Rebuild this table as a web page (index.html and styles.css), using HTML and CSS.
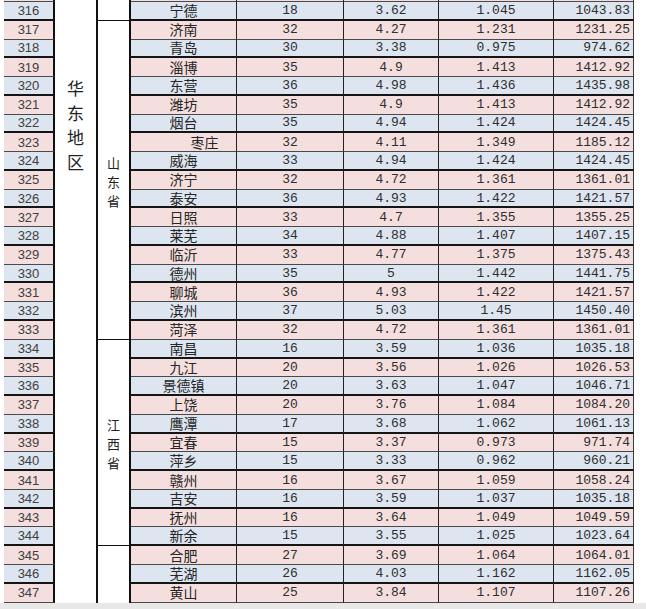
FILE: index.html
```html
<!DOCTYPE html>
<html lang="zh-CN">
<head>
<meta charset="utf-8">
<title>华东地区</title>
<link rel="stylesheet" href="styles.css">
</head>
<body>
<div class="sheet">
  <div class="region"><span class="region-text">华<br>东<br>地<br>区</span></div>
  <div class="prov prov-fj"></div>
  <div class="prov prov-sd"><span class="prov-text">山<br>东<br>省</span></div>
  <div class="prov prov-jx"><span class="prov-text">江<br>西<br>省</span></div>
  <div class="prov prov-ah"></div>

  <div class="row pink top"><div class="cell num"></div><div class="cell city"></div><div class="cell val"></div><div class="cell val"></div><div class="cell val"></div><div class="cell val total"></div></div>

  <div class="row blue"><div class="cell num">316</div><div class="cell city">宁德</div><div class="cell val">18</div><div class="cell val">3.62</div><div class="cell val">1.045</div><div class="cell val total">1043.83</div></div>
  <div class="row pink"><div class="cell num">317</div><div class="cell city">济南</div><div class="cell val">32</div><div class="cell val">4.27</div><div class="cell val">1.231</div><div class="cell val total">1231.25</div></div>
  <div class="row blue"><div class="cell num">318</div><div class="cell city">青岛</div><div class="cell val">30</div><div class="cell val">3.38</div><div class="cell val">0.975</div><div class="cell val total">974.62</div></div>
  <div class="row pink"><div class="cell num">319</div><div class="cell city">淄博</div><div class="cell val">35</div><div class="cell val">4.9</div><div class="cell val">1.413</div><div class="cell val total">1412.92</div></div>
  <div class="row blue"><div class="cell num">320</div><div class="cell city">东营</div><div class="cell val">36</div><div class="cell val">4.98</div><div class="cell val">1.436</div><div class="cell val total">1435.98</div></div>
  <div class="row pink"><div class="cell num">321</div><div class="cell city">潍坊</div><div class="cell val">35</div><div class="cell val">4.9</div><div class="cell val">1.413</div><div class="cell val total">1412.92</div></div>
  <div class="row blue"><div class="cell num">322</div><div class="cell city">烟台</div><div class="cell val">35</div><div class="cell val">4.94</div><div class="cell val">1.424</div><div class="cell val total">1424.45</div></div>
  <div class="row pink"><div class="cell num">323</div><div class="cell city shift">枣庄</div><div class="cell val">32</div><div class="cell val">4.11</div><div class="cell val">1.349</div><div class="cell val total">1185.12</div></div>
  <div class="row blue"><div class="cell num">324</div><div class="cell city">威海</div><div class="cell val">33</div><div class="cell val">4.94</div><div class="cell val">1.424</div><div class="cell val total">1424.45</div></div>
  <div class="row pink"><div class="cell num">325</div><div class="cell city">济宁</div><div class="cell val">32</div><div class="cell val">4.72</div><div class="cell val">1.361</div><div class="cell val total">1361.01</div></div>
  <div class="row blue"><div class="cell num">326</div><div class="cell city">泰安</div><div class="cell val">36</div><div class="cell val">4.93</div><div class="cell val">1.422</div><div class="cell val total">1421.57</div></div>
  <div class="row pink"><div class="cell num">327</div><div class="cell city">日照</div><div class="cell val">33</div><div class="cell val">4.7</div><div class="cell val">1.355</div><div class="cell val total">1355.25</div></div>
  <div class="row blue"><div class="cell num">328</div><div class="cell city">莱芜</div><div class="cell val">34</div><div class="cell val">4.88</div><div class="cell val">1.407</div><div class="cell val total">1407.15</div></div>
  <div class="row pink"><div class="cell num">329</div><div class="cell city">临沂</div><div class="cell val">33</div><div class="cell val">4.77</div><div class="cell val">1.375</div><div class="cell val total">1375.43</div></div>
  <div class="row blue"><div class="cell num">330</div><div class="cell city">德州</div><div class="cell val">35</div><div class="cell val">5</div><div class="cell val">1.442</div><div class="cell val total">1441.75</div></div>
  <div class="row pink"><div class="cell num">331</div><div class="cell city">聊城</div><div class="cell val">36</div><div class="cell val">4.93</div><div class="cell val">1.422</div><div class="cell val total">1421.57</div></div>
  <div class="row blue"><div class="cell num">332</div><div class="cell city">滨州</div><div class="cell val">37</div><div class="cell val">5.03</div><div class="cell val">1.45</div><div class="cell val total">1450.40</div></div>
  <div class="row pink"><div class="cell num">333</div><div class="cell city">菏泽</div><div class="cell val">32</div><div class="cell val">4.72</div><div class="cell val">1.361</div><div class="cell val total">1361.01</div></div>
  <div class="row blue"><div class="cell num">334</div><div class="cell city">南昌</div><div class="cell val">16</div><div class="cell val">3.59</div><div class="cell val">1.036</div><div class="cell val total">1035.18</div></div>
  <div class="row pink"><div class="cell num">335</div><div class="cell city">九江</div><div class="cell val">20</div><div class="cell val">3.56</div><div class="cell val">1.026</div><div class="cell val total">1026.53</div></div>
  <div class="row blue"><div class="cell num">336</div><div class="cell city">景德镇</div><div class="cell val">20</div><div class="cell val">3.63</div><div class="cell val">1.047</div><div class="cell val total">1046.71</div></div>
  <div class="row pink"><div class="cell num">337</div><div class="cell city">上饶</div><div class="cell val">20</div><div class="cell val">3.76</div><div class="cell val">1.084</div><div class="cell val total">1084.20</div></div>
  <div class="row blue"><div class="cell num">338</div><div class="cell city">鹰潭</div><div class="cell val">17</div><div class="cell val">3.68</div><div class="cell val">1.062</div><div class="cell val total">1061.13</div></div>
  <div class="row pink"><div class="cell num">339</div><div class="cell city">宜春</div><div class="cell val">15</div><div class="cell val">3.37</div><div class="cell val">0.973</div><div class="cell val total">971.74</div></div>
  <div class="row blue"><div class="cell num">340</div><div class="cell city">萍乡</div><div class="cell val">15</div><div class="cell val">3.33</div><div class="cell val">0.962</div><div class="cell val total">960.21</div></div>
  <div class="row pink"><div class="cell num">341</div><div class="cell city">赣州</div><div class="cell val">16</div><div class="cell val">3.67</div><div class="cell val">1.059</div><div class="cell val total">1058.24</div></div>
  <div class="row blue"><div class="cell num">342</div><div class="cell city">吉安</div><div class="cell val">16</div><div class="cell val">3.59</div><div class="cell val">1.037</div><div class="cell val total">1035.18</div></div>
  <div class="row pink"><div class="cell num">343</div><div class="cell city">抚州</div><div class="cell val">16</div><div class="cell val">3.64</div><div class="cell val">1.049</div><div class="cell val total">1049.59</div></div>
  <div class="row blue"><div class="cell num">344</div><div class="cell city">新余</div><div class="cell val">15</div><div class="cell val">3.55</div><div class="cell val">1.025</div><div class="cell val total">1023.64</div></div>
  <div class="row pink"><div class="cell num">345</div><div class="cell city">合肥</div><div class="cell val">27</div><div class="cell val">3.69</div><div class="cell val">1.064</div><div class="cell val total">1064.01</div></div>
  <div class="row blue"><div class="cell num">346</div><div class="cell city">芜湖</div><div class="cell val">26</div><div class="cell val">4.03</div><div class="cell val">1.162</div><div class="cell val total">1162.05</div></div>
  <div class="row pink"><div class="cell num">347</div><div class="cell city">黄山</div><div class="cell val">25</div><div class="cell val">3.84</div><div class="cell val">1.107</div><div class="cell val total">1107.26</div></div>
</div>
<div class="footer"></div>
</body>
</html>
```

FILE: styles.css
```css
html, body {
  margin: 0;
  padding: 0;
  background: #ffffff;
}

body {
  width: 646px;
  height: 609px;
  overflow: hidden;
  font-family: "Liberation Sans", "Noto Sans CJK SC", sans-serif;
  color: #2b2b2b;
}

.sheet {
  display: grid;
  grid-template-columns: 51px 43px 33px 106px 107px 95px 115px 80px;
  grid-template-rows: 2px repeat(32, 18.78px);
  margin-left: 4px;
  width: 630px;
}

.row {
  display: contents;
}

.cell {
  box-sizing: border-box;
  display: flex;
  align-items: center;
  justify-content: center;
  white-space: nowrap;
  line-height: 15px;
  min-height: 0;
}

.top > .cell {
  overflow: hidden;
}

.pink > .cell {
  background: #f5dfde;
  border-bottom: 1px solid #4a4a4a;
}

.blue > .cell {
  background: #dde5f0;
  border-bottom: 2px solid #151515;
}

.num {
  grid-column: 1;
  font-family: "Liberation Sans", sans-serif;
  font-size: 13px;
  color: #404040;
  border-right: 2px solid #111111;
}

.city {
  font-family: "Noto Sans CJK SC", sans-serif;
  font-size: 14px;
  color: #262626;
  border-right: 1px solid #222222;
}

.shift {
  padding-left: 42px;
}

.val {
  font-family: "Liberation Mono", monospace;
  font-size: 13px;
  color: #2e2e2e;
  border-right: 1px solid #222222;
}

.total {
  justify-content: flex-end;
  padding-right: 3px;
  border-right-color: #3a3a3a;
}

.region {
  grid-column: 2;
  grid-row: 1 / span 33;
  box-sizing: border-box;
  background: #ffffff;
  border-right: 2px solid #111111;
  display: flex;
  justify-content: center;
  padding-top: 76px;
}

.region-text {
  font-family: "Noto Sans CJK SC", sans-serif;
  font-size: 17px;
  line-height: 24.7px;
  color: #222222;
}

.prov {
  grid-column: 3;
  box-sizing: border-box;
  background: #ffffff;
  border-right: 2px solid #111111;
  border-bottom: 1px solid #111111;
  display: flex;
  align-items: center;
  justify-content: center;
}

.prov-fj { grid-row: 1 / span 2; }
.prov-sd { grid-row: 3 / span 17; }
.prov-jx { grid-row: 20 / span 11; }
.prov-ah { grid-row: 31 / span 3; border-bottom: none; }

.prov-text {
  font-family: "Noto Sans CJK SC", sans-serif;
  font-size: 13px;
  line-height: 19px;
  color: #222222;
  padding-top: 3px;
}

.footer {
  height: 6px;
  background: #e8e8e8;
}
```
